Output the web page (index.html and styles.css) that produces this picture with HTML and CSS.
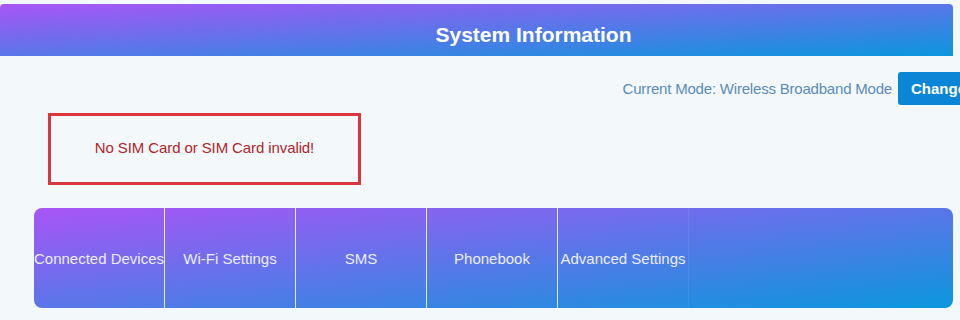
FILE: index.html
```html
<!DOCTYPE html>
<html lang="en">
<head>
<meta charset="utf-8">
<title>System Information</title>
<link rel="stylesheet" href="styles.css">
</head>
<body>
<div class="page">
  <header class="header">
    <h1 class="title">System Information</h1>
  </header>
  <div class="mode-row">
    <span class="mode-text">Current Mode: Wireless Broadband Mode</span>
    <button class="change-btn">Change</button>
  </div>
  <div class="alert">
    <span class="alert-text">No SIM Card or SIM Card invalid!</span>
  </div>
  <nav class="nav">
    <a class="nav-item">Connected Devices</a>
    <a class="nav-item">Wi-Fi Settings</a>
    <a class="nav-item">SMS</a>
    <a class="nav-item">Phonebook</a>
    <a class="nav-item nav-item-last">Advanced Settings</a>
  </nav>
</div>
</body>
</html>
```
FILE: styles.css
```css
html, body {
  margin: 0;
  padding: 0;
  overflow: hidden;
  background: #f3f8fb;
  font-family: "Liberation Sans", Arial, sans-serif;
}

.page {
  width: 953px;
  padding-top: 4px;
}

.header {
  height: 52px;
  box-sizing: border-box;
  padding: 10px 0 0 114px;
  display: flex;
  align-items: center;
  justify-content: center;
  border-radius: 4px 4px 0 0;
  background: linear-gradient(to bottom right, #a955f6, #0b97dc);
}

.title {
  margin: 0;
  color: #ffffff;
  font-size: 21px;
  font-weight: bold;
}

.mode-row {
  display: flex;
  justify-content: flex-end;
  align-items: center;
  gap: 6px;
  margin-top: 16px;
  margin-right: -30px;
}

.mode-text {
  color: #5b8cb8;
  font-size: 15px;
  letter-spacing: -0.2px;
}

.change-btn {
  height: 33px;
  width: 85px;
  border: none;
  border-radius: 3px;
  background: #0b85d6;
  color: #ffffff;
  font-family: "Liberation Sans", Arial, sans-serif;
  font-size: 15px;
  font-weight: bold;
  text-align: left;
  padding: 0 0 0 13px;
}

.alert {
  margin: 8px 0 0 48px;
  width: 313px;
  height: 72px;
  box-sizing: border-box;
  border: 3px solid #d9363e;
  display: flex;
  align-items: center;
  justify-content: center;
  padding-bottom: 3px;
}

.alert-text {
  color: #b0252b;
  font-size: 15px;
  letter-spacing: -0.1px;
}

.nav {
  margin: 23px 0 0 34px;
  height: 100px;
  display: flex;
  border-radius: 8px;
  overflow: hidden;
  background: linear-gradient(to bottom right, #a955f6, #0b97dc);
}

.nav-item {
  width: 130px;
  flex: none;
  border-right: 1px solid rgba(255, 255, 255, 0.85);
  display: flex;
  align-items: center;
  justify-content: center;
  color: #eceefd;
  font-size: 15px;
  white-space: nowrap;
}

.nav-item-last {
  border-right-color: rgba(255, 255, 255, 0.08);
}
```
